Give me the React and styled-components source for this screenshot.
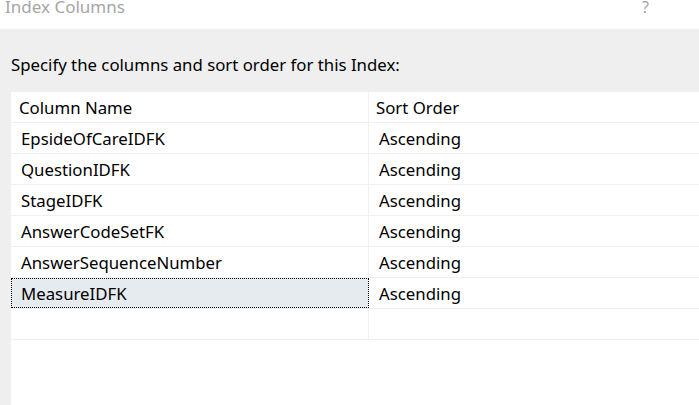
import React from "react";
import styled, { createGlobalStyle } from "styled-components";

const GlobalStyle = createGlobalStyle`
  html, body {
    margin: 0;
    padding: 0;
    background: #ffffff;
  }
  body {
    font-family: "Noto Sans", "Open Sans", sans-serif;
    overflow: hidden;
  }
`;

const Dialog = styled.div`
  width: 699px;
  height: 405px;
  display: flex;
  flex-direction: column;
  background: #efefef;
  overflow: hidden;
`;

const TitleBar = styled.div`
  height: 29px;
  flex-shrink: 0;
  background: #ffffff;
  display: flex;
  justify-content: space-between;
  align-items: flex-start;
  padding: 0 50px 0 5px;
`;

const Title = styled.div`
  font-size: 17px;
  line-height: 17px;
  margin-top: -2px;
  color: #a6a6a6;
`;

const Help = styled.div`
  font-size: 16px;
  line-height: 16px;
  margin-top: -1px;
  color: #a6a6a6;
`;

const Prompt = styled.div`
  height: 63px;
  flex-shrink: 0;
  display: flex;
  align-items: center;
  padding: 8px 0 0 11px;
  box-sizing: border-box;
  font-size: 16.8px;
  color: #000000;
`;

const GridArea = styled.div`
  flex: 1;
  margin-left: 11px;
  background: #ffffff;
`;

const Row = styled.div`
  display: grid;
  grid-template-columns: 358px 1fr;
  height: 31px;
  box-sizing: border-box;
  border-bottom: 1px solid #f0f0f0;
  font-size: 16.8px;
  color: #000000;
`;

const Cell = styled.div`
  display: flex;
  align-items: center;
  box-sizing: border-box;
  padding-left: ${(p) => p.$indent}px;
  border-right: ${(p) => (p.$divider ? "1px solid #f0f0f0" : "none")};
  background: ${(p) => (p.$selected ? "#e6ebf0" : "transparent")};
  outline: ${(p) => (p.$selected ? "1px dotted #000000" : "none")};
  outline-offset: -1px;
  white-space: nowrap;
`;

const rows = [
  "EpsideOfCareIDFK",
  "QuestionIDFK",
  "StageIDFK",
  "AnswerCodeSetFK",
  "AnswerSequenceNumber",
  "MeasureIDFK",
];

export default function App() {
  return (
    <>
      <GlobalStyle />
      <Dialog>
        <TitleBar>
          <Title>Index Columns</Title>
          <Help>?</Help>
        </TitleBar>
        <Prompt>Specify the columns and sort order for this Index:</Prompt>
        <GridArea>
          <Row>
            <Cell $indent={8} $divider>Column Name</Cell>
            <Cell $indent={7}>Sort Order</Cell>
          </Row>
          {rows.map((name, i) => (
            <Row key={name}>
              <Cell $indent={10} $divider $selected={i === rows.length - 1}>
                {name}
              </Cell>
              <Cell $indent={10}>Ascending</Cell>
            </Row>
          ))}
          <Row>
            <Cell $divider />
            <Cell />
          </Row>
        </GridArea>
      </Dialog>
    </>
  );
}
